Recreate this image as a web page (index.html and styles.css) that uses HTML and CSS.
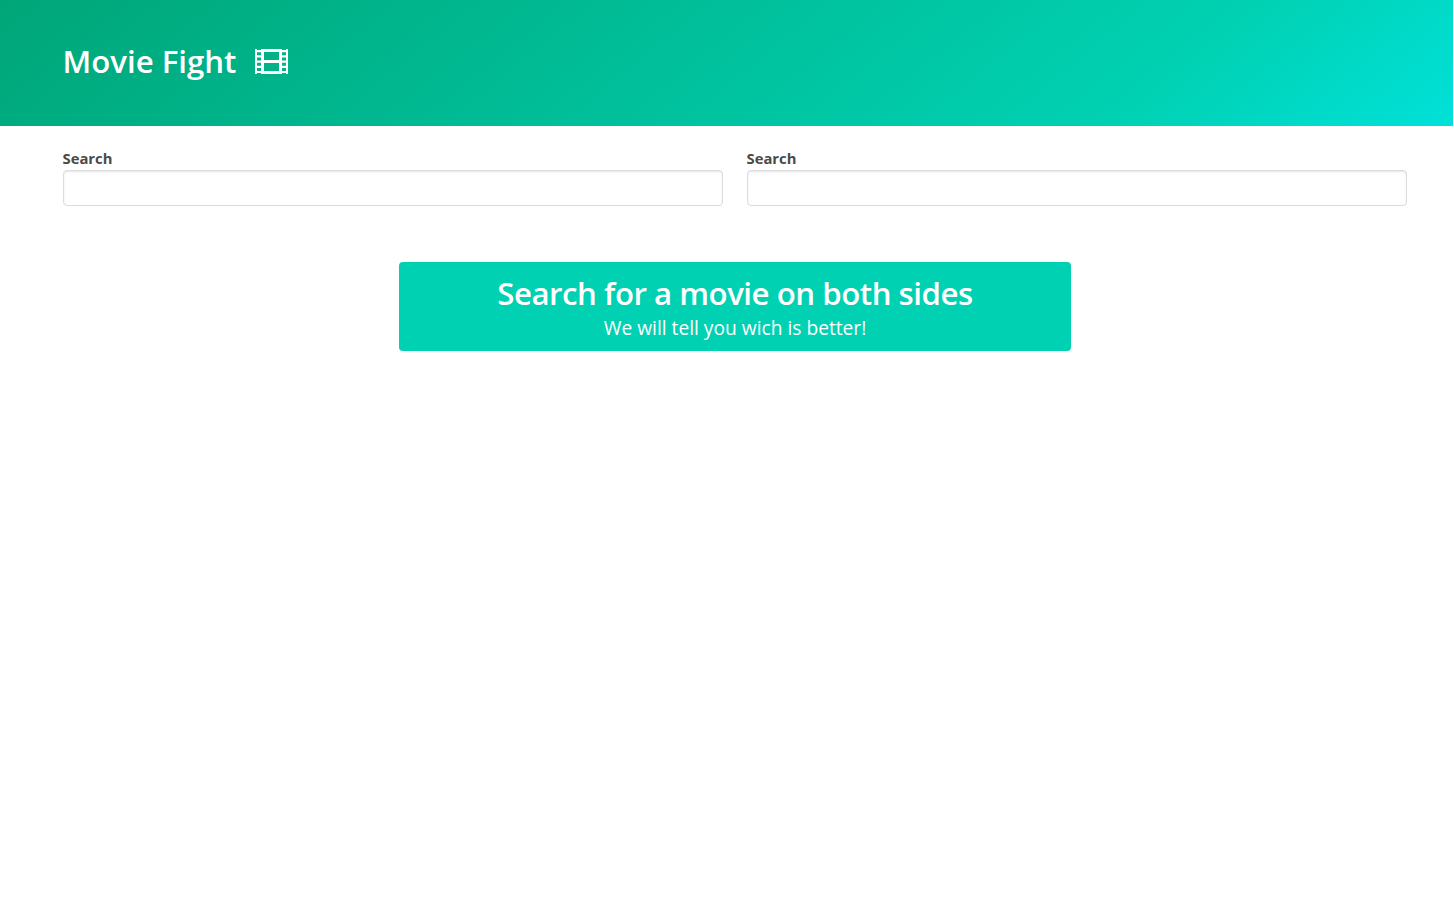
FILE: index.html
```html
<!DOCTYPE html>
<html lang="en">
<head>
  <meta charset="utf-8">
  <title>Movie Fight</title>
  <link rel="stylesheet" href="styles.css">
</head>
<body>
  <div class="page">
    <header class="hero">
      <div class="container hero-inner">
        <h1 class="title">Movie Fight</h1>
        <svg class="film" viewBox="0 0 33 25" width="33" height="25" aria-hidden="true">
          <path fill="#fff" fill-rule="evenodd" d="M0 0H2V1H6V0H27V1H31V0H33V25H31V24H27V25H6V24H2V25H0ZM2 3.200V6.200H6V3.200ZM2 8.500V11.500H6V8.500ZM2 13.700V16.700H6V13.700ZM2 19V22H6V19ZM27 3.200V6.200H31V3.200ZM27 8.500V11.500H31V8.500ZM27 13.700V16.700H31V13.700ZM27 19V22H31V19ZM9 3V11H24V3ZM9 14V22H24V14Z"/>
        </svg>
      </div>
    </header>
    <main class="container">
      <div class="columns">
        <div class="column">
          <label class="label" for="left">Search</label>
          <input class="input" id="left">
        </div>
        <div class="column">
          <label class="label" for="right">Search</label>
          <input class="input" id="right">
        </div>
      </div>
      <section class="notification">
        <h2 class="notice-title">Search for a movie on both sides</h2>
        <p class="subtitle">We will tell you wich is better!</p>
      </section>
    </main>
  </div>
</body>
</html>
```
FILE: styles.css
```css
* { box-sizing: border-box; }

body {
  margin: 0;
  background: #fff;
  color: #4a4a4a;
  font-family: "Open Sans", "Noto Sans", sans-serif;
  overflow: hidden;
}

/* The layout is wider than the visible area */
.page { width: 1470px; }

.container {
  width: 1344px;
  margin: 0 auto;
}

.hero {
  width: 1453px;
  height: 126px;
  background: linear-gradient(141deg, #00a678 0%, #00d1b2 78%, #00e1d9 100%);
}

.hero-inner {
  display: flex;
  align-items: center;
  height: 123px;
  margin-left: 63px;
}

.title,
.notice-title {
  margin: 0;
  color: #fff;
  font-size: 31.2px;
  font-weight: 600;
  line-height: 36px;
  letter-spacing: -0.47px;
  white-space: nowrap;
}

.title {
  width: 192px;
  padding-bottom: 2px;
  letter-spacing: 0;
  text-indent: -0.5px;
}

.film { display: block; }

.columns {
  display: flex;
  gap: 24px;
  padding-top: 24px;
}

.column { flex: 1; }

.label {
  display: block;
  height: 20px;
  font-size: 14.8px;
  font-weight: 700;
  line-height: 17px;
  text-indent: -0.5px;
}

.input {
  display: block;
  width: 100%;
  height: 36px;
  border: 1px solid #dbdbdb;
  border-radius: 4px;
  background: #fff;
  box-shadow: inset 0 1px 2px rgba(10, 10, 10, 0.1);
}

.notification {
  width: 672px;
  height: 89px;
  margin: 56px auto 0;
  padding-top: 13px;
  border-radius: 4px;
  background: #00d1b2;
  color: #fff;
  text-align: center;
}

.subtitle {
  margin: 4px 0 0;
  font-size: 19.2px;
  line-height: 26px;
}
```
